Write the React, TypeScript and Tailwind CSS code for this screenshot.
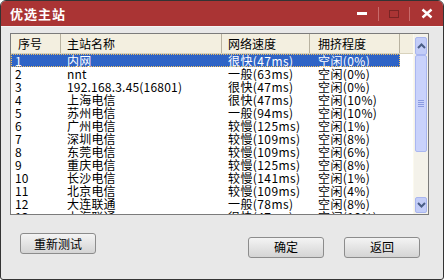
import React from "react";

const rows = [
  ["1", "内网", "很快(47ms)", "空闲(0%)"],
  ["2", "nnt", "一般(63ms)", "空闲(0%)"],
  ["3", "192.168.3.45(16801)", "很快(47ms)", "空闲(0%)"],
  ["4", "上海电信", "很快(47ms)", "空闲(10%)"],
  ["5", "苏州电信", "一般(94ms)", "空闲(10%)"],
  ["6", "广州电信", "较慢(125ms)", "空闲(1%)"],
  ["7", "深圳电信", "较慢(109ms)", "空闲(8%)"],
  ["8", "东莞电信", "较慢(109ms)", "空闲(6%)"],
  ["9", "重庆电信", "较慢(125ms)", "空闲(8%)"],
  ["10", "长沙电信", "较慢(141ms)", "空闲(1%)"],
  ["11", "北京电信", "较慢(109ms)", "空闲(4%)"],
  ["12", "大连联通", "一般(78ms)", "空闲(8%)"],
  ["13", "上海联通", "很快(47ms)", "空闲(10%)"],
];

const Btn = ({ label }: { label: string }) => (
  <button className="w-[76px] h-[21px] border border-[#8c8c8c] rounded-[3px] bg-gradient-to-b from-[#f4f4f4] to-[#d4d4d4] text-[12px] leading-none text-black">
    {label}
  </button>
);

const App = () => {
  return (
    <div className="w-[444px] h-[280px] bg-[#e8e8e8] border border-[#333] rounded-t-[6px] rounded-b-[3px] flex flex-col overflow-hidden font-['Noto_Sans_CJK_SC',sans-serif]">
      {/* Title bar */}
      <div className="h-[26px] bg-[#aa3434] border-b border-[#f4f4f4] flex items-center pl-[9px] pr-[10px] shrink-0">
        <span className="text-white font-bold text-[13px] tracking-[1px]">优选主站</span>
        <div className="ml-auto flex items-center">
          <span className="w-[10px] h-[3px] bg-white mr-[11px]"></span>
          <span className="w-[1px] h-[14px] bg-[#c86a6a]"></span>
          <span className="w-[10px] h-[8px] border border-[#7a2424] mx-[10px]"></span>
          <span className="w-[1px] h-[14px] bg-[#c86a6a]"></span>
          <svg width="12" height="11" viewBox="0 0 12 11" className="ml-[11px]">
            <path d="M1.5 1.5 L10.5 9.5 M10.5 1.5 L1.5 9.5" stroke="white" strokeWidth="2.4" />
          </svg>
        </div>
      </div>

      {/* Body */}
      <div className="flex flex-col pl-[9px] pt-[6px]">
        <div className="w-[419px] h-[182px] border border-[#7b7b7b] bg-white flex">
          <div className="flex-1 flex flex-col overflow-hidden">
            {/* Header */}
            <div className="h-[20px] shrink-0 flex bg-[#f3efe0] border-b border-[#d8d2bc] text-[12px] text-black items-center">
              <div className="w-[50px] pl-[7px] h-full flex items-center border-r border-[#b8b2a0]">序号</div>
              <div className="w-[161px] pl-[6px] h-full flex items-center border-r border-[#b8b2a0]">主站名称</div>
              <div className="w-[88px] pl-[6px] h-full flex items-center border-r border-[#b8b2a0]">网络速度</div>
              <div className="w-[90px] pl-[8px] h-full flex items-center border-r border-[#b8b2a0]">拥挤程度</div>
              <div className="flex-1 h-full"></div>
            </div>
            {/* Rows */}
            <div className="flex-1 overflow-hidden">
              {rows.map((r, i) => (
                <div
                  key={r[0]}
                  className={
                    i === 0
                      ? "w-[389px] h-[13px] flex items-center text-[12px] leading-[13px] bg-[#2f64c6] text-white outline-1 outline-dotted outline-[#f0c060] -outline-offset-1"
                      : "w-[389px] h-[13px] flex items-center text-[12px] leading-[13px] text-black"
                  }
                >
                  <div className="w-[50px] pl-[4px]">{r[0]}</div>
                  <div className="w-[161px] pl-[6px] tracking-[0.2px]">{r[1]}</div>
                  <div className="w-[88px] pl-[6px] tracking-[0.4px]">{r[2]}</div>
                  <div className="w-[90px] pl-[8px] tracking-[0.4px]">{r[3]}</div>
                </div>
              ))}
            </div>
          </div>

          {/* Scrollbar */}
          <div className="w-[15px] flex flex-col bg-[#f4f2ea] border-l border-[#fbf9ee]">
            <div className="h-[18px] mt-[3px] mx-[1px] bg-[#c3cdf8] border border-[#a9b6ef] rounded-[2px] flex items-center justify-center">
              <svg width="9" height="6" viewBox="0 0 9 6">
                <path d="M1 5 L4.5 1.5 L8 5" stroke="#4a5d86" strokeWidth="2" fill="none" />
              </svg>
            </div>
            <div className="h-[97px] mx-[1px] bg-[#c9d2fb] border border-[#aab7f1] rounded-[2px] flex flex-col items-center justify-center gap-[1px]">
              <span className="w-[6px] h-[1px] bg-[#8b9be0]"></span>
              <span className="w-[6px] h-[1px] bg-[#8b9be0]"></span>
              <span className="w-[6px] h-[1px] bg-[#8b9be0]"></span>
              <span className="w-[6px] h-[1px] bg-[#8b9be0]"></span>
            </div>
            <div className="flex-1"></div>
            <div className="h-[16px] mx-[1px] mb-[1px] bg-[#c3cdf8] border border-[#a9b6ef] rounded-[2px] flex items-center justify-center">
              <svg width="9" height="6" viewBox="0 0 9 6">
                <path d="M1 1 L4.5 4.5 L8 1" stroke="#4a5d86" strokeWidth="2" fill="none" />
              </svg>
            </div>
          </div>
        </div>

        {/* Buttons */}
        <div className="flex mt-[18px] pl-[10px]">
          <Btn label="重新测试" />
          <div className="ml-[152px]">
            <Btn label="确定" />
          </div>
          <div className="ml-[20px]">
            <Btn label="返回" />
          </div>
        </div>
      </div>
    </div>
  );
};

export default App;
